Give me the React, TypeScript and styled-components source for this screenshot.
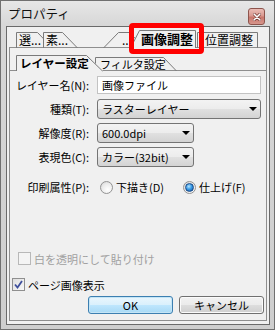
import styled, { createGlobalStyle } from "styled-components";

const GlobalStyle = createGlobalStyle`
  html, body {
    margin: 0;
    padding: 0;
    background: #ffffff;
  }
  body {
    font-family: "Noto Sans CJK JP", "Noto Sans", sans-serif;
    font-size: 11px;
    color: #000;
  }
  * {
    box-sizing: border-box;
  }
`;

const Window = styled.div`
  position: relative;
  width: 275px;
  height: 330px;
  border: 1px solid #707070;
  background: linear-gradient(#e7e7e7, #d7d7d7 24px, #cecece);
  display: flex;
  flex-direction: column;
`;

const TitleBar = styled.div`
  height: 25px;
  flex-shrink: 0;
  display: flex;
  align-items: flex-start;
  padding: 5px 9px 0 7px;
`;

const Title = styled.span`
  font-size: 12.5px;
  line-height: 16px;
  color: #111;
`;

const CloseButton = styled.div`
  margin-left: auto;
  margin-top: 2px;
  width: 17px;
  height: 17px;
  border: 1px solid #8d544c;
  border-radius: 3px;
  background: linear-gradient(#ebbdb6, #d99990 45%, #c9776c 55%, #d6958c);
  display: flex;
  align-items: center;
  justify-content: center;
`;

const Client = styled.div`
  flex: 1;
  margin: 0 4px 4px 5px;
  border: 1px solid #6a6a6a;
  background: #f0f0f0;
  padding: 0 2px 3px 2px;
  display: flex;
  flex-direction: column;
`;

const TabStrip = styled.div<{ $h: number; $line?: boolean }>`
  height: ${(p) => p.$h}px;
  flex-shrink: 0;
  display: flex;
  align-items: flex-end;
  border-bottom: ${(p) => (p.$line ? "1px solid #8e8e8e" : "none")};
`;

const TabItem = styled.div<{ $w: number; $h: number; $ml: number; $selected?: boolean }>`
  position: relative;
  z-index: ${(p) => (p.$selected ? 2 : 1)};
  flex-shrink: 0;
  width: ${(p) => p.$w}px;
  height: ${(p) => p.$h}px;
  margin-left: ${(p) => p.$ml}px;
  margin-bottom: -1px;
`;

const TabShape = styled.svg`
  position: absolute;
  left: 0;
  top: 0;
  overflow: visible;
`;

const TabLabel = styled.span<{ $pad: number; $bold?: boolean; $size: number; $lh: number }>`
  position: relative;
  display: block;
  padding-left: ${(p) => p.$pad}px;
  font-size: ${(p) => p.$size}px;
  font-weight: ${(p) => (p.$bold ? 700 : 400)};
  line-height: ${(p) => p.$lh}px;
  white-space: nowrap;
`;

const Panel = styled.div`
  flex: 1;
  border: 1px solid #8e8e8e;
  display: flex;
  flex-direction: column;
`;

const Row = styled.div<{ $mt: number; $h: number }>`
  margin-top: ${(p) => p.$mt}px;
  height: ${(p) => p.$h}px;
  display: grid;
  grid-template-columns: 79px auto;
  column-gap: 8px;
  align-items: center;
`;

const Label = styled.span`
  text-align: right;
  line-height: 16px;
  white-space: nowrap;
`;

const TextInput = styled.div`
  width: 164px;
  height: 18px;
  background: #fff;
  border: 1px solid #c3c3c3;
  padding-left: 4px;
  line-height: 16px;
`;

const Select = styled.div<{ $w: number }>`
  width: ${(p) => p.$w}px;
  height: 20px;
  border: 1px solid #747474;
  border-radius: 3px;
  background: linear-gradient(#f3f3f3, #ececec 50%, #e0e0e0 52%, #d3d3d3);
  display: flex;
  align-items: center;
  padding: 0 3px 0 4px;
  line-height: 16px;
  white-space: nowrap;

  svg {
    margin-left: auto;
  }
`;

const RadioGroup = styled.div`
  display: flex;
  align-items: center;
  padding-left: 3px;
`;

const RadioOption = styled.label<{ $w?: number }>`
  display: flex;
  align-items: center;
  gap: 3px;
  width: ${(p) => (p.$w ? `${p.$w}px` : "auto")};
  line-height: 16px;
  white-space: nowrap;
`;

const RadioCircle = styled.span<{ $checked?: boolean }>`
  width: 13px;
  height: 13px;
  border-radius: 50%;
  border: 1px solid #939393;
  background: radial-gradient(circle at 62% 68%, #ffffff 0%, #ececec 55%, #cfcfcf 100%);
  display: flex;
  align-items: center;
  justify-content: center;

  &::after {
    content: "";
    display: ${(p) => (p.$checked ? "block" : "none")};
    width: 7px;
    height: 7px;
    border-radius: 50%;
    border: 1px solid #1b4a86;
    background: radial-gradient(circle at 40% 35%, #b7e6ff 0%, #3a9be6 45%, #0f4f9c 100%);
  }
`;

const CheckRow = styled.label<{ $mt: number; $ml: number; $disabled?: boolean }>`
  margin-top: ${(p) => p.$mt}px;
  margin-left: ${(p) => p.$ml}px;
  height: 13px;
  display: flex;
  align-items: center;
  gap: 3px;
  line-height: 16px;
  white-space: nowrap;
  color: ${(p) => (p.$disabled ? "#a0a0a0" : "#000")};
`;

const CheckBox = styled.span<{ $disabled?: boolean }>`
  width: 13px;
  height: 13px;
  flex-shrink: 0;
  border: 1px solid ${(p) => (p.$disabled ? "#b8b8b8" : "#8f8f8f")};
  background: ${(p) =>
    p.$disabled ? "#f4f4f4" : "linear-gradient(135deg, #dedede, #f8f8f8)"};
  display: flex;
  align-items: center;
  justify-content: center;
`;

const ButtonRow = styled.div`
  margin-top: 5px;
  display: flex;
  justify-content: flex-end;
  gap: 6px;
  padding-right: 2px;
`;

const Button = styled.button<{ $default?: boolean }>`
  width: 85px;
  height: 18px;
  padding: 0;
  font-family: inherit;
  font-size: 11px;
  line-height: 14px;
  color: #000;
  border-radius: 3px;
  border: 1px solid ${(p) => (p.$default ? "#3c7fb1" : "#707070")};
  background: ${(p) =>
    p.$default
      ? "linear-gradient(#eaf6fd, #d9f0fc 50%, #bee6fd 52%, #a7d9f5)"
      : "linear-gradient(#f2f2f2, #ebebeb 50%, #dddddd 52%, #cfcfcf)"};
  box-shadow: ${(p) => (p.$default ? "inset 0 0 0 1px #c4e5f6" : "inset 0 0 0 1px #fbfbfb")};
`;

const Highlight = styled.div`
  position: absolute;
  left: 128px;
  top: 22px;
  width: 75px;
  height: 31px;
  border: 5px solid #ff0000;
  border-radius: 4px;
  z-index: 5;
`;

interface TabProps {
  label: string;
  w: number;
  h: number;
  ml: number;
  ls?: number;
  rs?: number;
  pad: number;
  selected?: boolean;
  size?: number;
}

const Tab = ({ label, w, h, ml, ls = 0, rs = 0, pad, selected, size = 11 }: TabProps) => {
  const bottom = selected ? h : h - 1;
  const outline = `0.5,${h} ${ls + 0.5},0.5 ${w - rs - 0.5},0.5 ${w - 0.5},${h}`;
  const fill = `0,${bottom} ${ls},0 ${w - rs},0 ${w},${bottom}`;
  return (
    <TabItem $w={w} $h={h} $ml={ml} $selected={selected}>
      <TabShape width={w} height={h}>
        <polygon points={fill} fill="#f0f0f0" />
        <polyline points={outline} fill="none" stroke="#7a7a7a" strokeWidth="1" />
      </TabShape>
      <TabLabel $pad={pad} $bold={selected} $size={size} $lh={h}>
        {label}
      </TabLabel>
    </TabItem>
  );
};

const Arrow = () => (
  <svg width="8" height="4" viewBox="0 0 8 4">
    <polygon points="0,0 8,0 4,4" fill="#000" />
  </svg>
);

export default function App() {
  return (
    <>
      <GlobalStyle />
      <Window>
        <TitleBar>
          <Title>プロパティ</Title>
          <CloseButton>
            <svg width="8" height="8" viewBox="0 0 8 8">
              <path d="M1 1 L7 7 M7 1 L1 7" stroke="#7b4039" strokeWidth="3" strokeLinecap="round" />
              <path d="M1 1 L7 7 M7 1 L1 7" stroke="#ffffff" strokeWidth="1.5" strokeLinecap="round" />
            </svg>
          </CloseButton>
        </TitleBar>
        <Client>
          <TabStrip $h={20}>
            <Tab label="選..." w={37} h={16} ml={7} rs={15} pad={3} size={12} />
            <Tab label="素..." w={35} h={16} ml={-10} rs={15} pad={3} size={12} />
            <Tab label="..." w={42} h={16} ml={25} ls={15} rs={15} pad={19} size={12} />
            <Tab label="画像調整" w={66} h={18} ml={-15} ls={9} pad={11} selected size={13} />
            <Tab label="位置調整" w={61} h={16} ml={1} pad={8} size={12} />
          </TabStrip>
          <Panel>
            <TabStrip $h={23} $line>
              <Tab label="レイヤー設定" w={87} h={16} ml={6} rs={16} pad={4} selected size={11.5} />
              <Tab label="フィルタ設定" w={82} h={14} ml={-8} rs={13} pad={5} />
            </TabStrip>
            <Row $mt={5} $h={18}>
              <Label>レイヤー名(N):</Label>
              <TextInput>画像ファイル</TextInput>
            </Row>
            <Row $mt={5} $h={20}>
              <Label>種類(T):</Label>
              <Select $w={164}>
                ラスターレイヤー
                <Arrow />
              </Select>
            </Row>
            <Row $mt={4} $h={20}>
              <Label>解像度(R):</Label>
              <Select $w={97}>
                600.0dpi
                <Arrow />
              </Select>
            </Row>
            <Row $mt={4} $h={20}>
              <Label>表現色(C):</Label>
              <Select $w={97}>
                カラー(32bit)
                <Arrow />
              </Select>
            </Row>
            <Row $mt={10} $h={20}>
              <Label>印刷属性(P):</Label>
              <RadioGroup>
                <RadioOption $w={83}>
                  <RadioCircle />
                  下描き(D)
                </RadioOption>
                <RadioOption>
                  <RadioCircle $checked />
                  仕上げ(F)
                </RadioOption>
              </RadioGroup>
            </Row>
            <CheckRow $mt={55} $ml={8} $disabled>
              <CheckBox $disabled />
              白を透明にして貼り付け
            </CheckRow>
            <CheckRow $mt={13} $ml={2}>
              <CheckBox>
                <svg width="9" height="9" viewBox="0 0 9 9">
                  <path d="M1 4.5 L3.5 7.5 L8 1" fill="none" stroke="#3f4f9c" strokeWidth="1.8" />
                </svg>
              </CheckBox>
              ページ画像表示
            </CheckRow>
            <ButtonRow>
              <Button $default>OK</Button>
              <Button>キャンセル</Button>
            </ButtonRow>
          </Panel>
        </Client>
        <Highlight />
      </Window>
    </>
  );
}
